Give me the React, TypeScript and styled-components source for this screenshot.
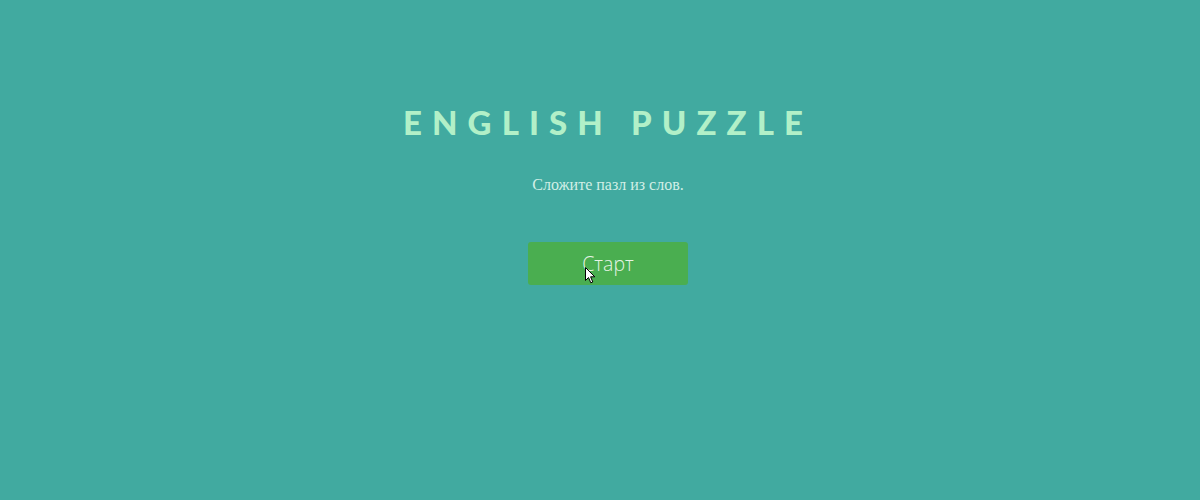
import React from "react";
import styled, { createGlobalStyle } from "styled-components";

const Global = createGlobalStyle`
  html, body { margin: 0; padding: 0; background: #41aaa0; }
  body { width: 1200px; height: 500px; overflow: hidden; }
`;

const Page = styled.main`
  margin-left: 8px;
  width: 1200px;
  height: 500px;
  display: flex;
  flex-direction: column;
  align-items: center;
  padding-top: 102px;
  box-sizing: border-box;
`;

const Title = styled.h1`
  margin: 0;
  font-family: Lato, "Liberation Sans", sans-serif;
  font-weight: 900;
  font-size: 33px;
  line-height: 40px;
  letter-spacing: 10.1px;
  color: #b2f0c8;
`;

const Subtitle = styled.p`
  margin: 33px 0 0;
  font-family: "Liberation Serif", "DejaVu Serif", serif;
  font-size: 16px;
  line-height: 20px;
  color: #d2efe6;
`;

const StartButton = styled.button`
  position: relative;
  margin-top: 47px;
  width: 160px;
  height: 43px;
  border: none;
  border-radius: 3px;
  background: #4aae50;
  color: #e6f4e6;
  font-family: "Open Sans", "Liberation Sans", sans-serif;
  font-weight: 300;
  font-size: 19.5px;
  cursor: pointer;
`;

const Cursor = styled.svg`
  position: absolute;
  left: 57px;
  top: 25px;
  width: 11px;
  height: 17px;
`;

export default function App() {
  return (
    <>
      <Global />
      <Page>
        <Title>ENGLISH PUZZLE</Title>
        <Subtitle>Сложите пазл из слов.</Subtitle>
        <StartButton>
          Старт
          <Cursor viewBox="0 0 11 17">
            <path d="M0.5 0.5 L0.5 13.5 L3.5 10.5 L5.8 15.8 L7.8 15 L5.6 9.8 L9.8 9.8 Z" fill="#fff" stroke="#000" strokeWidth="1" />
          </Cursor>
        </StartButton>
      </Page>
    </>
  );
}
